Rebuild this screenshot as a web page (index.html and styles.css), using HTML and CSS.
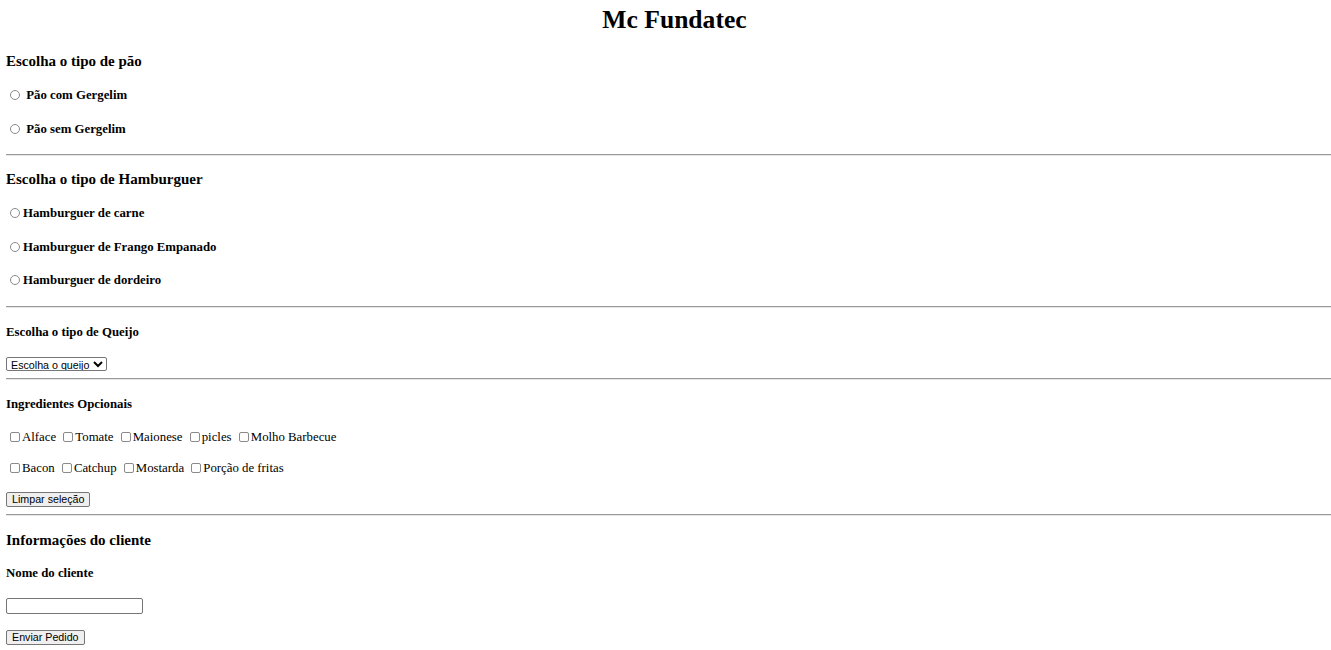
FILE: index.html
```html
<!DOCTYPE html>
<html lang="pt-BR">
<head>
<meta charset="utf-8">
<title>Mc Fundatec</title>
<link rel="stylesheet" href="styles.css">
</head>
<body>
<h1 class="title">Mc Fundatec</h1>

<h3 class="section-title first">Escolha o tipo de pão</h3>
<h4 class="option"><input type="radio" name="pao" class="radio"> <label>Pão com Gergelim</label></h4>
<h4 class="option"><input type="radio" name="pao" class="radio"> <label>Pão sem Gergelim</label></h4>
<hr class="divider">

<h3 class="section-title">Escolha o tipo de Hamburguer</h3>
<h4 class="option"><input type="radio" name="hamb" class="radio"><label>Hamburguer de carne</label></h4>
<h4 class="option"><input type="radio" name="hamb" class="radio"><label>Hamburguer de Frango Empanado</label></h4>
<h4 class="option"><input type="radio" name="hamb" class="radio"><label>Hamburguer de dordeiro</label></h4>
<hr class="divider">

<h4 class="sub-title">Escolha o tipo de Queijo</h4>
<div class="control-row">
  <select class="select">
    <option>Escolha o queijo</option>
    <option>Cheddar</option>
    <option>Mussarela</option>
    <option>Prato</option>
  </select>
</div>
<hr class="divider">

<h4 class="sub-title">Ingredientes Opcionais</h4>
<p class="checks first-checks"><input type="checkbox" class="check"><label>Alface</label> <input type="checkbox" class="check"><label>Tomate</label> <input type="checkbox" class="check"><label>Maionese</label> <input type="checkbox" class="check"><label>picles</label> <input type="checkbox" class="check"><label>Molho Barbecue</label></p>
<p class="checks"><input type="checkbox" class="check"><label>Bacon</label> <input type="checkbox" class="check"><label>Catchup</label> <input type="checkbox" class="check"><label>Mostarda</label> <input type="checkbox" class="check"><label>Porção de fritas</label></p>
<div class="control-row clear-row"><button type="button" class="btn">Limpar seleção</button></div>
<hr class="divider">

<h3 class="section-title client-title">Informações do cliente</h3>
<h4 class="sub-title">Nome do cliente</h4>
<div class="control-row"><input type="text" class="text-input"></div>
<div class="control-row send-row"><button type="submit" class="btn">Enviar Pedido</button></div>
</body>
</html>
```

FILE: styles.css
```css
html, body {
  background: #fff;
}

body {
  margin: 0 0 8px 6px;
  font-family: "Liberation Serif", "Times New Roman", serif;
  font-size: 12.8px;
  color: #000;
}

.title {
  margin: 5px 0 17px;
  padding-left: 12px;
  font-size: 25.6px;
  line-height: 30px;
  text-align: center;
  font-weight: bold;
}

.section-title {
  margin: 14px 0 15px;
  font-size: 15px;
  line-height: 18px;
  font-weight: bold;
}

.client-title {
  margin-top: 15px;
}

.sub-title {
  margin: 17px 0;
  font-size: 12.8px;
  line-height: 15px;
  font-weight: bold;
}

.option {
  margin: 17px 0;
  font-size: 12.8px;
  line-height: 16.5px;
  font-weight: bold;
}

.radio {
  appearance: none;
  -webkit-appearance: none;
  box-sizing: border-box;
  width: 10px;
  height: 10px;
  margin: 2px 3px 0 4px;
  border: 1px solid #8a8a8a;
  border-radius: 50%;
  background: #fff;
  vertical-align: -1px;
}

.checks {
  margin: 16px 0;
  line-height: 15px;
}

.first-checks {
  margin-top: 18px;
  margin-bottom: 15px;
}

.check {
  appearance: none;
  -webkit-appearance: none;
  box-sizing: border-box;
  width: 10px;
  height: 10px;
  margin: 2px 2px 0 4px;
  border: 1px solid #8a8a8a;
  border-radius: 2px;
  background: #fff;
  vertical-align: -1px;
}

.divider {
  margin: 7px 0 6px;
  border: 0;
  border-top: 1px solid #9a9a9a;
  border-bottom: 1px solid #e6e6e6;
  height: 0;
}

.control-row {
  margin: 0;
  line-height: 0;
}

.clear-row {
  margin-top: 15px;
}

.checks + .clear-row {
  margin-top: 15px;
}

.send-row {
  margin-top: 16px;
}

.select {
  font-family: "Liberation Sans", Arial, sans-serif;
  font-size: 10.7px;
  height: 14px;
  width: 101px;
  padding: 0;
  margin: 0;
  border: 1px solid #767676;
  border-radius: 2px;
  background: #fff;
  color: #000;
}

.btn {
  font-family: "Liberation Sans", Arial, sans-serif;
  font-size: 10.7px;
  height: 15px;
  line-height: 12px;
  padding: 0 5px;
  margin: 0;
  border: 1px solid #767676;
  border-radius: 2px;
  background: #efefef;
  color: #000;
}

.text-input {
  width: 137px;
  height: 16px;
  box-sizing: border-box;
  margin: 0;
  padding: 0 2px;
  border: 1px solid #767676;
  border-radius: 2px;
  font-family: "Liberation Sans", Arial, sans-serif;
  font-size: 10.7px;
}
```
